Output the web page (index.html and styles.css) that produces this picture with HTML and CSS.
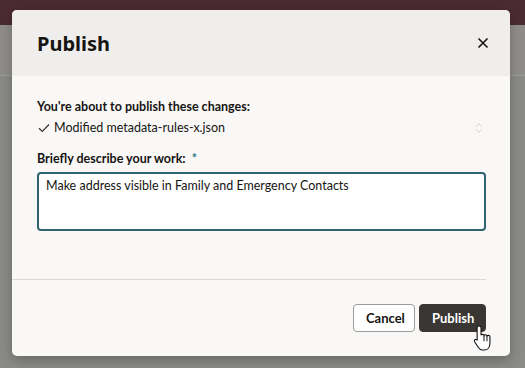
FILE: index.html
```html
<!DOCTYPE html>
<html lang="en">
<head>
    <meta charset="UTF-8">
    <title>Publish</title>
    <link rel="stylesheet" href="styles.css">
</head>
<body>
    <div class="backdrop">
        <div class="topbar"></div>
        <div class="band"></div>
    </div>

    <div class="dialog">
        <div class="dialog-header">
            <h1>Publish</h1>
            <button class="close-btn" aria-label="Close">
                <svg width="12" height="12" viewBox="0 0 12 12"><path d="M1.5 1.5 L10.5 10.5 M10.5 1.5 L1.5 10.5" stroke="#161513" stroke-width="1.6" fill="none"/></svg>
            </button>
        </div>
        <div class="dialog-body">
            <div class="label">You're about to publish these changes:</div>
            <div class="change-row">
                <span class="check">
                    <svg width="12" height="10" viewBox="0 0 12 10"><path d="M1 5.2 L4.3 8.4 L11 1.5" stroke="#333" stroke-width="1.2" fill="none"/></svg>
                </span>
                <span class="change-name">Modified metadata-rules-x.json</span>
                <span class="spinner">
                    <svg width="6" height="12" viewBox="0 0 6 12"><path d="M0.5 4.5 L3 1.5 L5.5 4.5 M0.5 7.5 L3 10.5 L5.5 7.5" stroke="#d6d4d0" stroke-width="1" fill="none"/></svg>
                </span>
            </div>
            <div class="label field-label">Briefly describe your work: <span class="required">*</span></div>
            <div class="textarea">Make address visible in Family and Emergency Contacts</div>
        </div>
        <div class="dialog-footer">
            <button class="btn btn-cancel">Cancel</button>
            <button class="btn btn-publish">Publish</button>
        </div>
        <svg class="cursor" width="22" height="29" viewBox="0 0 20 26">
            <path d="M5.5 1.5 C6.6 1.5 7.3 2.2 7.3 3.3 L7.3 10 C7.6 9 9.6 8.9 10 10.2 C10.4 9.3 12.3 9.3 12.7 10.6 C13.2 9.8 15.2 10 15.4 11.4 L15.4 17 C15.4 20.5 13.6 23.5 10.4 23.5 L8.6 23.5 C6.9 23.5 5.9 22.7 4.9 21.2 L1.6 16.2 C1 15.2 1.3 14.3 2.1 14 C2.9 13.7 3.5 14.1 4 14.8 L3.8 14.5 L3.7 3.3 C3.7 2.2 4.4 1.5 5.5 1.5 Z" fill="#fff" stroke="#111" stroke-width="1"/>
            <path d="M10 10.4 L10 15.5 M12.7 10.8 L12.7 15.5" stroke="#111" stroke-width="0.9"/>
        </svg>
    </div>
</body>
</html>
```

FILE: styles.css
```css
body {
    margin: 0;
    width: 525px;
    height: 368px;
    overflow: hidden;
    background-color: #8a8a89;
    font-family: Lato, "Noto Sans", Arial, sans-serif;
    color: #161513;
    position: relative;
}
.backdrop {
    position: absolute;
    inset: 0;
}
.topbar {
    height: 25px;
    background-color: #4b2b32;
}
.band {
    height: 50px;
    border-bottom: 1px solid #9d9c9a;
    background-color: #8e8d8c;
}
.dialog {
    position: absolute;
    left: 12px;
    top: 10px;
    width: 498px;
    height: 346px;
    background-color: #f9f8f6;
    border-radius: 5px;
    box-shadow: 0 4px 12px rgba(0, 0, 0, 0.25);
    display: flex;
    flex-direction: column;
}
.dialog-header {
    height: 66px;
    background-color: #efeeec;
    border-radius: 5px 5px 0 0;
    display: flex;
    align-items: center;
    justify-content: space-between;
    padding: 0 20px 0 25px;
}
.dialog-header h1 {
    margin: 0;
    font-family: "Noto Sans", Arial, sans-serif;
    font-size: 20px;
    font-weight: 700;
    padding-top: 1px;
}
.close-btn {
    background: none;
    border: none;
    padding: 0;
    width: 12px;
    height: 12px;
    margin-right: 1px;
    display: flex;
}
.dialog-body {
    padding: 22px 24px 0 25px;
    flex: 1;
}
.label {
    font-size: 12.5px;
    font-weight: 700;
    line-height: 18px;
}
.change-row {
    display: flex;
    align-items: center;
    margin-top: 3px;
    font-size: 12.5px;
    line-height: 18px;
}
.check {
    width: 16px;
    margin-left: 1px;
    display: flex;
}
.change-name {
    flex: 1;
}
.spinner {
    display: flex;
    margin-right: 4px;
}
.field-label {
    margin-top: 13px;
}
.required {
    color: #2c7a87;
    margin-left: 3px;
}
.textarea {
    margin-top: 4px;
    height: 47px;
    border: 2px solid #2e6470;
    border-radius: 4px;
    background-color: #fff;
    padding: 4px 7px;
    font-size: 12.5px;
    line-height: 16px;
}
.dialog-footer {
    margin: 0 24px 0 0;
    border-top: 1px solid #dcdad7;
    height: 77px;
    display: flex;
    justify-content: flex-end;
    align-items: flex-start;
    padding-top: 24px;
    box-sizing: border-box;
    gap: 4px;
}
.btn {
    height: 28px;
    border-radius: 4px;
    font-family: inherit;
    font-size: 13px;
    font-weight: 700;
    padding: 0 12px;
}
.btn-cancel {
    background-color: #fff;
    border: 1px solid #9e9c99;
    color: #161513;
    width: 62px;
}
.btn-publish {
    background-color: #3a3633;
    border: 1px solid #3a3633;
    color: #fff;
    width: 67px;
}
.cursor {
    position: absolute;
    left: 461px;
    top: 314px;
}
```
